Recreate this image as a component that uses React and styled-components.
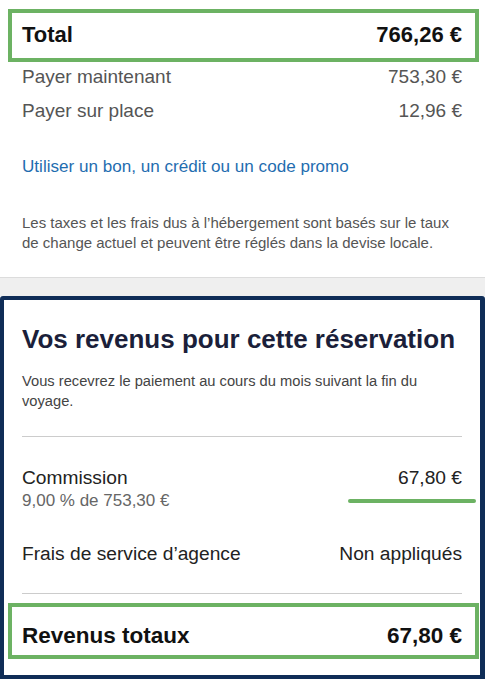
import React from "react";
import styled, { createGlobalStyle } from "styled-components";

const GlobalStyle = createGlobalStyle`
  body {
    margin: 0;
    background: #ffffff;
    font-family: "Liberation Sans", Arial, sans-serif;
  }
`;

const Page = styled.div`
  width: 485px;
  height: 679px;
  overflow: hidden;
  background: #ffffff;
`;

const Summary = styled.section`
  padding: 9px 0 24px;
  border-bottom: 1px solid #dcdcdc;
`;

const HighlightBox = styled.div`
  display: flex;
  justify-content: space-between;
  align-items: baseline;
  box-sizing: border-box;
  margin: ${(p) => p.$margin};
  padding: ${(p) => p.$padding};
  border: 4px solid #6cb263;
  font-weight: bold;
  font-size: ${(p) => p.$size}px;
  line-height: 30px;
  color: #111111;
`;

const PayRow = styled.div`
  display: flex;
  justify-content: space-between;
  padding: 0 23px 0 22px;
  font-size: 19px;
  line-height: 30px;
  color: #555555;
  margin-top: ${(p) => p.$top || 0}px;
`;

const PromoLink = styled.a`
  display: block;
  margin: 31px 22px 0;
  font-size: 17.1px;
  line-height: 20px;
  color: #1f6db0;
  text-decoration: none;
`;

const Notice = styled.p`
  margin: 36px 22px 0;
  font-size: 15px;
  line-height: 20px;
  color: #555555;
`;

const Band = styled.div`
  height: 18px;
  background: #efefef;
`;

const EarningsCard = styled.section`
  position: relative;
  box-sizing: border-box;
  height: 383px;
  border: 4px solid #0f2d57;
  border-right-width: 5px;
  border-radius: 3px 3px 0 0;
  padding: 23px 0 0;
`;

const Heading = styled.h2`
  margin: 0 18px;
  font-size: 26px;
  line-height: 32px;
  font-weight: bold;
  color: #1b1f3a;
`;

const Lead = styled.p`
  margin: 16px 18px 0;
  font-size: 14.7px;
  line-height: 20px;
  color: #444444;
`;

const Divider = styled.hr`
  margin: ${(p) => p.$top}px 18px 0;
  border: none;
  border-top: 1px solid #cccccc;
`;

const LineItem = styled.div`
  display: flex;
  justify-content: space-between;
  margin: ${(p) => p.$top}px 18px 0;
  font-size: 19.2px;
  line-height: 24px;
  color: #222222;
`;

const LineNote = styled.div`
  margin: 0 18px;
  font-size: 17px;
  line-height: 22px;
  color: #666666;
`;

const Underline = styled.span`
  position: absolute;
  left: 344px;
  top: 199px;
  width: 128px;
  height: 4px;
  border-radius: 2px;
  background: #6cb263;
`;

export default function App() {
  return (
    <Page>
      <GlobalStyle />
      <Summary>
        <HighlightBox $margin="0 6px 0 8px" $padding="7px 13px 8px 10px" $size={22}>
          <span>Total</span>
          <span>766,26 €</span>
        </HighlightBox>
        <PayRow>
          <span>Payer maintenant</span>
          <span>753,30 €</span>
        </PayRow>
        <PayRow $top={4}>
          <span>Payer sur place</span>
          <span>12,96 €</span>
        </PayRow>
        <PromoLink href="#">Utiliser un bon, un crédit ou un code promo</PromoLink>
        <Notice>
          Les taxes et les frais dus à l’hébergement sont basés sur le taux de change actuel et
          peuvent être réglés dans la devise locale.
        </Notice>
      </Summary>
      <Band />
      <EarningsCard>
        <Heading>Vos revenus pour cette réservation</Heading>
        <Lead>Vous recevrez le paiement au cours du mois suivant la fin du voyage.</Lead>
        <Divider $top={25} />
        <LineItem $top={29}>
          <span>Commission</span>
          <span>67,80 €</span>
        </LineItem>
        <LineNote>9,00 % de 753,30 €</LineNote>
        <LineItem $top={30}>
          <span>Frais de service d’agence</span>
          <span>Non appliqués</span>
        </LineItem>
        <Divider $top={27} />
        <HighlightBox $margin="9px 1px 0 4px" $padding="14px 13px 4px 10px" $size={22.5}>
          <span>Revenus totaux</span>
          <span>67,80 €</span>
        </HighlightBox>
        <Underline />
      </EarningsCard>
    </Page>
  );
}
